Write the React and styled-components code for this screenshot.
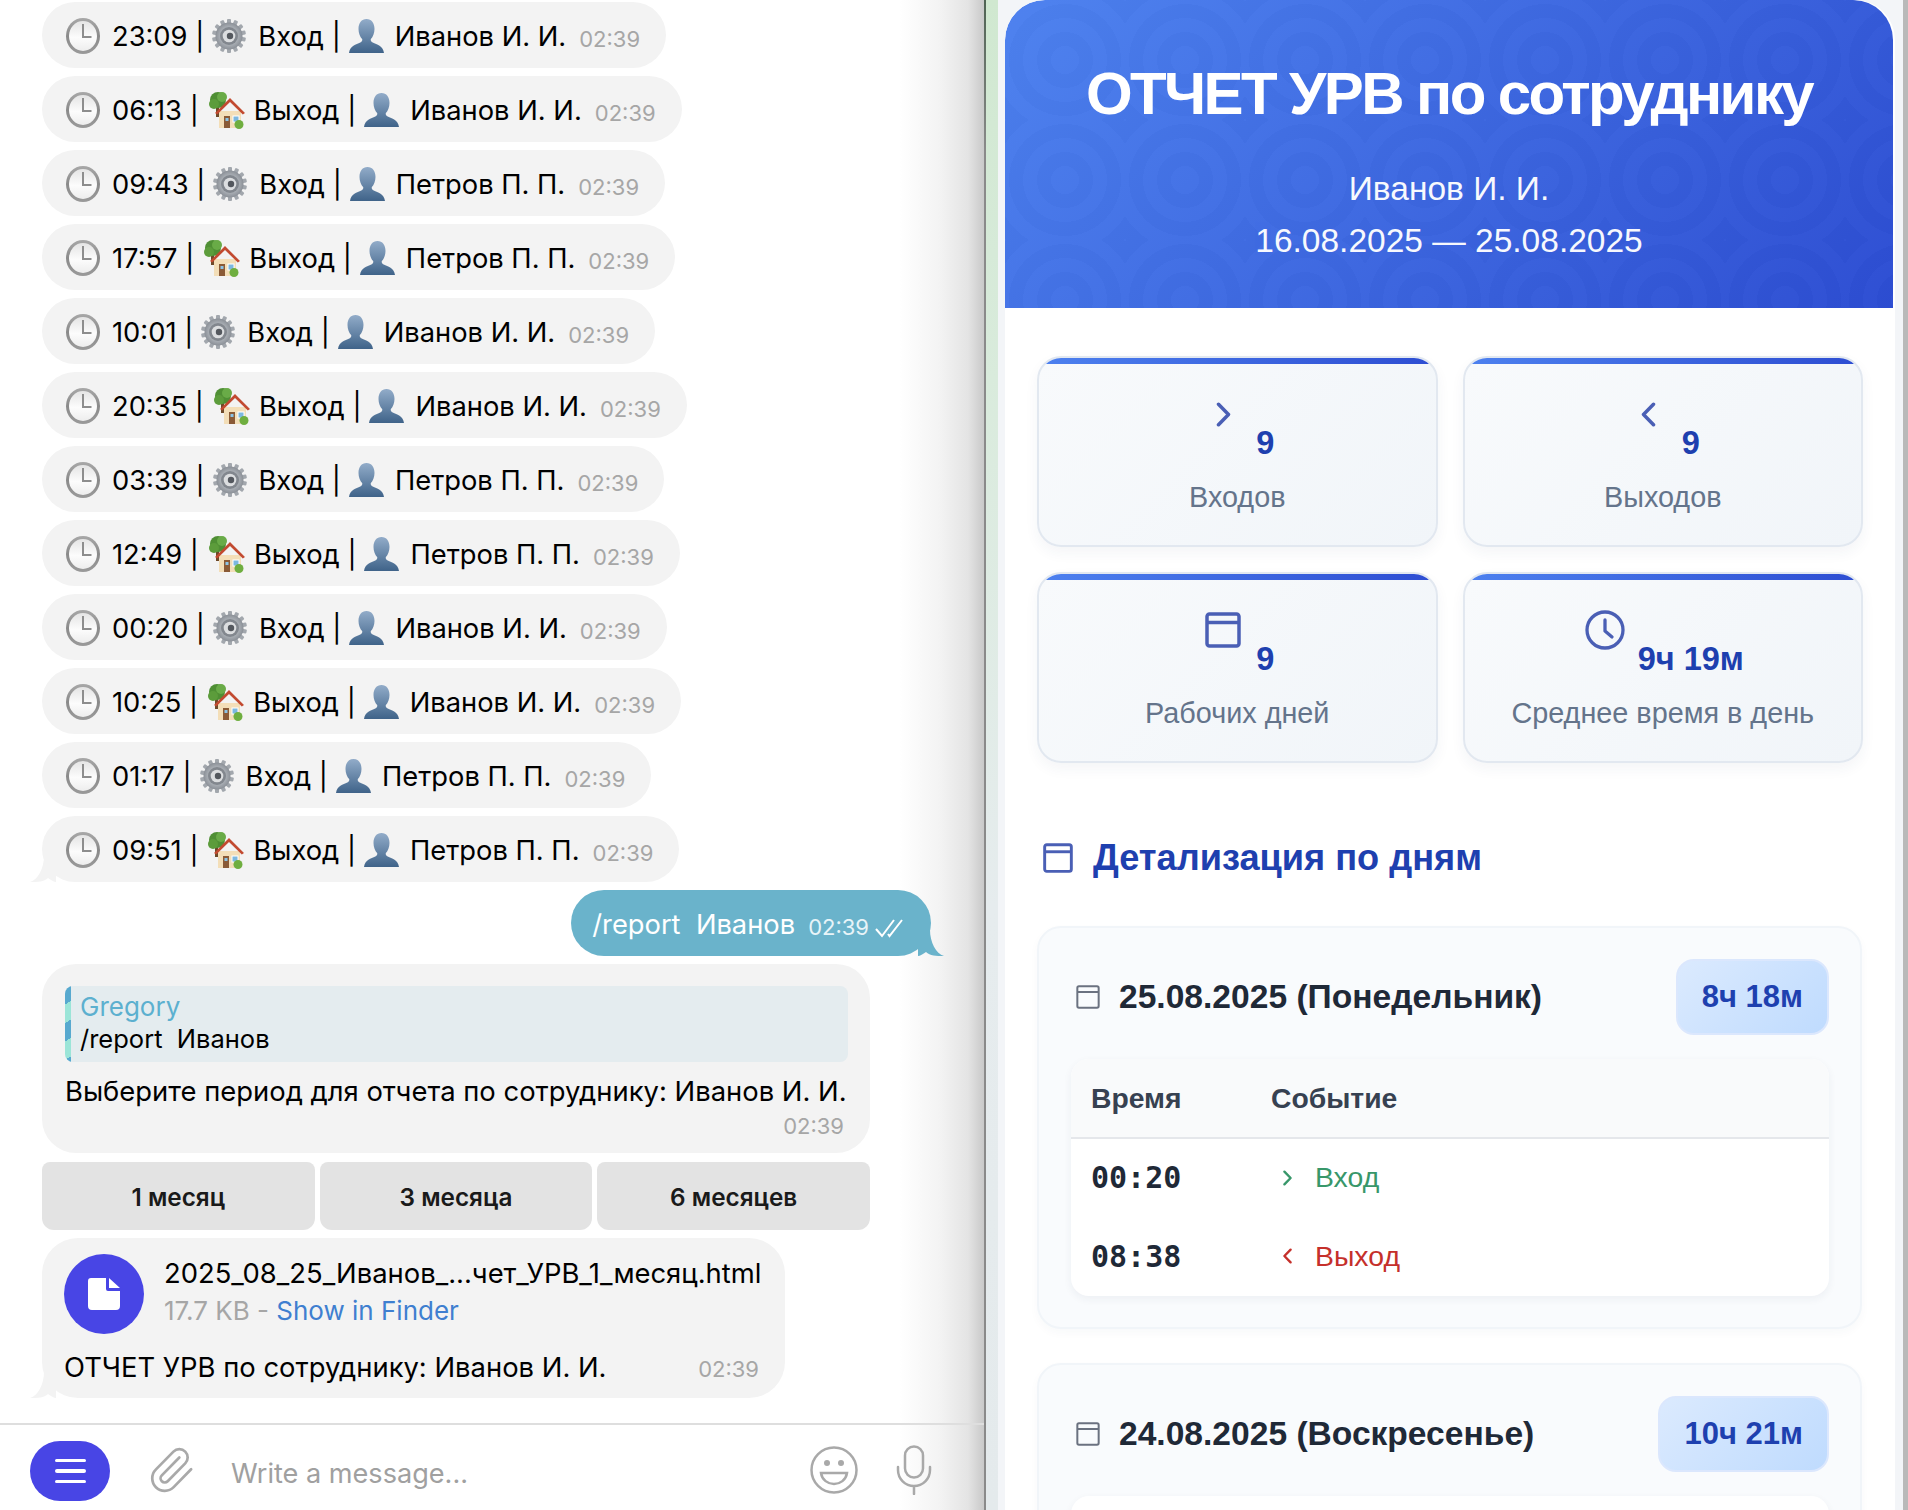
import React, { useId } from "react";
import styled, { createGlobalStyle } from "styled-components";
import { Paperclip } from "lucide-react";

const Global = createGlobalStyle`
  html, body { margin: 0; padding: 0; background: #fff; }
  * { box-sizing: border-box; }
`;

const Page = styled.div`
  width: 1908px; height: 1510px; display: flex; overflow: hidden;
  font-family: Inter, "Liberation Sans", sans-serif;
`;
const ChatPane = styled.section`
  width: 984px; height: 100%; display: flex; flex-direction: column; flex: none;
  background: linear-gradient(to right, #fff 0, #fff 900px, #f3f3f3 940px, #e4e4e4 968px, #c9c9c9 984px);
  color: #000;
`;
const MessageList = styled.div`
  flex: 1; padding: 2px 0 0 42px; display: flex; flex-direction: column; align-items: flex-start; gap: 8px;
`;
const Bubble = styled.div`
  position: relative; height: 66px; border-radius: 33px; background: #f3f3f3;
  display: inline-flex; align-items: center; padding: 2px 26px 0 24px; font-size: 27.3px; white-space: pre;
`;
const Seg = styled.span`
  display: inline-flex; align-items: center; margin-right: ${p => p.$mr ?? 9}px;
`;
const Time = styled.span`
  font-size: 22px; color: ${p => p.$light ? "#e8f4f8" : "#a6a6a6"}; position: ${p => p.$static ? "static" : "relative"};
  top: 3px; margin-left: ${p => p.$ml ?? 13}px;
`;
const TailSvg = styled.svg`
  position: absolute; bottom: 0; ${p => p.$right ? "right: -13px;" : "left: -12px;"} width: 26px; height: 26px;
`;
const OutBubble = styled(Bubble)`
  align-self: flex-end; margin-right: 53px; background: #6ab3cb; color: #fff; padding: 2px 24px 0 21px;
`;
const ReplyBubble = styled.div`
  width: 828px; height: 189px; border-radius: 34px; background: #f3f3f3; padding: 22px 22px 0 23px; margin-bottom: 1px;
  display: flex; flex-direction: column;
`;
const Quote = styled.div`
  height: 76px; border-radius: 8px; background: #e4ecef; position: relative; padding: 5px 0 0 15px; overflow: hidden;
  font-size: 26px; line-height: 32px; white-space: pre;
  &::before {
    content: ""; position: absolute; left: 0; top: 0; bottom: 0; width: 6px;
    background: repeating-linear-gradient(150deg, #57a9cf 0 16px, #9be5d8 16px 32px);
  }
`;
const QuoteName = styled.div` color: #5cb0cf; `;
const QuoteText = styled.div` font-size: 25.5px; `;
const ReplyText = styled.div` font-size: 27.4px; line-height: 34px; margin-top: 12px; white-space: pre; `;
const ReplyTime = styled.div` font-size: 22px; color: #a6a6a6; align-self: flex-end; margin: 3px 4px 0 0; line-height: 30px; `;
const ButtonRow = styled.div` width: 828px; display: grid; grid-template-columns: 1fr 1fr 1fr; gap: 5px; `;
const KeyButton = styled.button`
  height: 68px; border: 0; padding: 2px 0 0; background: #e3e3e3; border-radius: 8px 8px 12px 12px; font: 600 24.3px Inter, sans-serif; color: #1a1a1a;
`;
const FileBubble = styled.div`
  position: relative; width: 743px; height: 160px; border-radius: 36px; background: #f3f3f3; padding: 16px 22px 0 22px;
`;
const FileRow = styled.div` display: flex; gap: 20px; `;
const FileCircle = styled.div`
  width: 80px; height: 80px; border-radius: 50%; background: #4845e5; display: flex; align-items: center; justify-content: center; flex: none;
`;
const FileName = styled.div` font-size: 27.4px; line-height: 38px; white-space: nowrap; `;
const FileMeta = styled.div` font-size: 26px; line-height: 38px; color: #a6a6a6; `;
const FileLink = styled.span` color: #3f7fd0; `;
const Caption = styled.div`
  display: flex; justify-content: space-between; align-items: baseline; margin-top: 16px; font-size: 27.4px; line-height: 34px; padding-right: 4px;
`;
const Composer = styled.div`
  height: 87px; flex: none; border-top: 2px solid #dedede; display: flex; align-items: center; padding: 0 52px 0 30px;
`;
const MenuButton = styled.div`
  width: 80px; height: 60px; border-radius: 30px; background: #4845e5; display: flex; flex-direction: column; gap: 7px;
  align-items: center; justify-content: center; margin-top: 7px;
`;
const MenuBar = styled.span` width: 31px; height: 3.5px; border-radius: 2px; background: #fff; `;
const ClipIcon = styled(Paperclip)` margin: 5px 0 0 36px; flex: none; color: #a9a9a9; `;
const Placeholder = styled.div` flex: 1; margin: 11px 0 0 35px; font-size: 27.1px; color: #a0a0a0; `;
const ComposerIcon = styled.svg` flex: none; margin: 4px 0 0 ${p => p.$ml}px; `;
const CheckMarks = styled.svg` margin-left: 6px; position: relative; top: 4px; `;

const Divider = styled.div`
  width: 2px; flex: none; background: linear-gradient(to bottom, #4f6353 0, #8a8a8a 10%, #8a8a8a 100%);
`;
const Stripe = styled.div`
  width: 12px; flex: none; background: linear-gradient(to bottom, #d0e8d0 0, #d9ebdc 25%, #e6ecee 60%, #e4eaec 100%);
`;
const ReportWindow = styled.div`
  flex: 1; background: #f3f5f8; padding-left: 7px; display: flex; border-right: 5px solid #b9b9b9; padding-right: 8px;
`;
const Report = styled.main`
  width: 890px; background: #fff; font-family: "Liberation Sans", Arial, sans-serif; border-radius: 40px 40px 0 0; overflow: hidden;
`;
const Header = styled.header`
  width: 888px; height: 308px; border-radius: 40px 40px 0 0; color: #fff; text-align: center; padding-top: 58px;
  background:
    repeating-radial-gradient(circle at 60px 60px, rgba(255,255,255,.012) 0 14px, rgba(0,0,0,.01) 14px 28px) 0 0 / 120px 120px,
    linear-gradient(135deg, #4d81ef 0%, #2d4dd2 100%);
`;
const Title = styled.h1` margin: 0; font-size: 60px; line-height: 72px; font-weight: 700; letter-spacing: -2.6px; `;
const Sub = styled.div` font-size: 33.5px; line-height: 52px; opacity: .96; `;
const SubFirst = styled(Sub)` margin-top: 33px; `;
const Body = styled.div` padding: 48px 32px 0 32px; `;
const Stats = styled.div` display: grid; grid-template-columns: 400.5px 400.5px; gap: 25px; `;
const StatCard = styled.div`
  position: relative; height: 191px; border-radius: 24px; border: 2px solid #e2e8f0; overflow: hidden; text-align: center;
  background: linear-gradient(135deg, #f8fafc, #f1f5f9); box-shadow: 0 6px 14px rgba(30,50,90,.05); padding-top: 32px;
  &::before {
    content: ""; position: absolute; left: 0; right: 0; top: 0; height: 6px; background: linear-gradient(90deg, #4d81ef, #2d4dd2);
  }
`;
const StatTop = styled.div` display: flex; justify-content: center; height: 64px; `;
const StatIconBox = styled.div` width: 46px; height: 48px; display: flex; align-items: center; justify-content: center; margin-right: 10px; `;
const StatValue = styled.div` font-size: 32.5px; font-weight: 700; color: #1e40af; line-height: 40px; margin-top: 33px; `;
const StatLabel = styled.div` font-size: 28.8px; color: #64748b; line-height: 36px; margin-top: 25px; `;
const SectionHead = styled.h2`
  display: flex; align-items: center; gap: 20px; margin: 75px 0 48px 6px; height: 40px; font-size: 36.2px; color: #1e40af; font-weight: 700;
`;
const DayCard = styled.article`
  border-radius: 24px; border: 2px solid #f1f5f9; background: #f9fbfd; padding: 31px 31px 31px 32px; margin-bottom: 34px;
  box-shadow: 0 4px 10px rgba(30,50,90,.03); width: 825px;
`;
const DayHead = styled.div` display: flex; align-items: center; justify-content: space-between; height: 76px; margin-bottom: 24px; `;
const DayTitle = styled.h3` display: flex; align-items: center; gap: 19px; margin: 0 0 1px 5px; font-size: 33.6px; font-weight: 700; color: #1f2937; `;
const Badge = styled.div`
  height: 76px; padding: 0 24px; border-radius: 18px; border: 2px solid #dbe7fd; display: flex; align-items: center;
  background: linear-gradient(135deg, #dbeafe, #bfdbfe); color: #1e40af; font-size: 31px; font-weight: 700;
`;
const TableBox = styled.div`
  border-radius: 18px; overflow: hidden; background: #fff; box-shadow: 0 3px 8px rgba(30,50,90,.06);
  min-height: 120px;
`;
const Table = styled.table` width: 100%; border-collapse: collapse; table-layout: fixed; `;
const Th = styled.th`
  height: 79px; padding: 0 0 0 20px; text-align: left; background: #f9fafb; color: #374151; font-size: 28.3px; font-weight: 700;
  border-bottom: 2px solid #e5e7eb; width: ${p => p.$w || "auto"};
`;
const TdTime = styled.td` height: 79px; padding: 0 0 1px 20px; font: 700 30px "DejaVu Sans Mono", monospace; color: #1f2937; `;
const TdEvent = styled.td` padding: 0 0 2px 20px; font-size: 28.4px; color: ${p => p.$c}; `;
const EventInner = styled.span` display: inline-flex; align-items: center; gap: 22px; padding-left: 11px; `;

function ClockEmoji() {
  const rim = useId();
  const face = useId();
  return (
    <svg width="34" height="36" viewBox="0 0 34 36">
      <defs>
        <linearGradient id={rim} x1="0" y1="0" x2="0" y2="1">
          <stop offset="0" stopColor="#a8a8a8" /><stop offset=".5" stopColor="#8a8a8a" /><stop offset="1" stopColor="#9a9a9a" />
        </linearGradient>
        <linearGradient id={face} x1="0" y1="0" x2="0" y2="1">
          <stop offset="0" stopColor="#e4e4e4" /><stop offset=".55" stopColor="#fcfcfc" /><stop offset="1" stopColor="#ededed" />
        </linearGradient>
      </defs>
      <ellipse cx="17" cy="18" rx="17" ry="18" fill={`url(#${rim})`} />
      <ellipse cx="17" cy="18" rx="14" ry="15" fill={`url(#${face})`} />
      <path d="M17 6V19H25.500" fill="none" stroke="#8d8d8d" strokeWidth="2" />
    </svg>
  );
}
function GearEmoji() {
  const id = useId();
  const teeth = Array.from({ length: 14 }, (_, i) => i * (360 / 14));
  return (
    <svg width="34" height="36" viewBox="0 0 34 36">
      <defs>
        <radialGradient id={id}>
          <stop offset="0" stopColor="#f0f0f0" /><stop offset=".6" stopColor="#aeb3b9" /><stop offset="1" stopColor="#8b9097" />
        </radialGradient>
      </defs>
      <g transform="translate(0 1)">
        {teeth.map(a => <rect key={a} x="15" y="0" width="4" height="7" rx="1" fill="#a2a7ad" transform={`rotate(${a} 17 17)`} />)}
        <circle cx="17" cy="17" r="13.500" fill={`url(#${id})`} />
        <circle cx="17" cy="17" r="9" fill="#82878e" />
        <circle cx="17" cy="17" r="6.300" fill="#dcdee0" />
        <circle cx="18" cy="17" r="3.200" fill="#54585e" />
      </g>
    </svg>
  );
}
function HouseEmoji() {
  return (
    <svg width="36" height="38" viewBox="0 0 36 38">
      <rect x="7" y="14" width="3" height="12" fill="#6d4a2a" />
      <circle cx="9" cy="9" r="8" fill="#4f8f34" />
      <circle cx="5" cy="13" r="5" fill="#5c9c3b" />
      <circle cx="13" cy="6" r="5" fill="#69ab47" />
      <path d="M10 20h22v17H10z" fill="#f3deb8" />
      <path d="M6 22L21 7l15 15-2.2 1.6L21 11 8.2 23.6z" fill="#c24a30" />
      <rect x="15" y="25" width="6" height="12" fill="#8a5a36" />
      <rect x="24" y="25" width="6" height="6" fill="#7db8e0" stroke="#fff" strokeWidth="1" />
      <rect x="16.5" y="27" width="3" height="3" fill="#8cc3e6" />
      <circle cx="30" cy="33.5" r="4.5" fill="#6fae3f" />
    </svg>
  );
}
function PersonEmoji() {
  const id = useId();
  return (
    <svg width="35" height="34" viewBox="0 0 35 34">
      <defs>
        <linearGradient id={id} x1="0" y1="0" x2="0" y2="1">
          <stop offset="0" stopColor="#92acc9" /><stop offset="1" stopColor="#3f6389" />
        </linearGradient>
      </defs>
      <path fill={`url(#${id})`} d="M17.5 0c5 0 8 4 8 10 0 4-1.6 8-3.6 10-.6 1 0 2.6 1.8 3.6C28 25.6 34 27 35 34H0c1-7 7-8.4 11.300-10.400 1.800-1 2.400-2.600 1.800-3.600C11.100 18 9.500 14 9.500 10c0-6 3-10 8-10z" />
    </svg>
  );
}
function Tail({ color, right }) {
  return (
    <TailSvg $right={right} viewBox="0 0 26 26">
      {right
        ? <path d="M0 0H12C12 12 18 24 26 26 18 26 12 26 8 22 5 24 2 26 0 26z" fill={color} />
        : <path d="M26 0H14C14 12 8 24 0 26 8 26 14 26 18 22 21 24 24 26 26 26z" fill={color} />}
    </TailSvg>
  );
}
const Chevron = ({ dir, w, h, color, sw }) => (
  <svg width={w} height={h} viewBox={`0 0 ${w} ${h}`} fill="none" stroke={color} strokeWidth={sw} strokeLinecap="round" strokeLinejoin="round">
    <path d={dir === "r" ? `M${sw} ${sw / 2 + .5}L${w - sw} ${h / 2}L${sw} ${h - sw / 2 - .5}` : `M${w - sw} ${sw / 2 + .5}L${sw} ${h / 2}L${w - sw} ${h - sw / 2 - .5}`} />
  </svg>
);
const Calendar = ({ size, color, sw }) => (
  <svg width={size} height={size} viewBox="0 0 36 36" fill="none" stroke={color} strokeWidth={sw}>
    <rect x="2" y="2" width="32" height="32" rx="2.500" />
    <path d="M2 10.500H34" />
  </svg>
);
const ClockIcon = () => (
  <svg width="40" height="40" viewBox="0 0 40 40" fill="none" stroke="#4a5fb5" strokeWidth="3.300" strokeLinecap="round" strokeLinejoin="round">
    <circle cx="20" cy="20" r="18" />
    <path d="M20 10V21L27 27" />
  </svg>
);
const StatIndigo = "#4a5fb5";

const rows = [
  ["23:09", "in", "Иванов И. И."], ["06:13", "out", "Иванов И. И."], ["09:43", "in", "Петров П. П."], ["17:57", "out", "Петров П. П."],
  ["10:01", "in", "Иванов И. И."], ["20:35", "out", "Иванов И. И."], ["03:39", "in", "Петров П. П."], ["12:49", "out", "Петров П. П."],
  ["00:20", "in", "Иванов И. И."], ["10:25", "out", "Иванов И. И."], ["01:17", "in", "Петров П. П."], ["09:51", "out", "Петров П. П."],
];

function LogBubble({ time, kind, name, tail }) {
  return (
    <Bubble>
      <Seg $mr={12}><ClockEmoji /></Seg>
      <Seg $mr={kind === "in" ? 8 : 10}>{time} |</Seg>
      <Seg $mr={kind === "in" ? 12 : 9}>{kind === "in" ? <GearEmoji /> : <HouseEmoji />}</Seg>
      <Seg $mr={8}>{kind === "in" ? "Вход" : "Выход"} |</Seg>
      <Seg $mr={11}><PersonEmoji /></Seg>
      <span>{name}</span>
      <Time>02:39</Time>
      {tail && <Tail color="#f3f3f3" />}
    </Bubble>
  );
}

function DayBlock({ title, total, events }) {
  return (
    <DayCard>
      <DayHead>
        <DayTitle><Calendar size={24} color="#6b7280" sw={3} />{title}</DayTitle>
        <Badge>{total}</Badge>
      </DayHead>
      <TableBox>
        {events && (
          <Table>
            <thead>
              <tr><Th $w="180px">Время</Th><Th>Событие</Th></tr>
            </thead>
            <tbody>
              {events.map(([t, k]) => (
                <tr key={t}>
                  <TdTime>{t}</TdTime>
                  <TdEvent $c={k === "in" ? "#38976a" : "#c5302b"}>
                    <EventInner>
                      <Chevron dir={k === "in" ? "r" : "l"} w={11} h={16} color={k === "in" ? "#38976a" : "#c5302b"} sw={2.4} />
                      {k === "in" ? "Вход" : "Выход"}
                    </EventInner>
                  </TdEvent>
                </tr>
              ))}
            </tbody>
          </Table>
        )}
      </TableBox>
    </DayCard>
  );
}

export default function App() {
  return (
    <Page>
      <Global />
      <ChatPane>
        <MessageList>
          {rows.map(([t, k, n], i) => <LogBubble key={t} time={t} kind={k} name={n} tail={i === rows.length - 1} />)}
          <OutBubble>
            <span>/report  Иванов</span>
            <Time $light $ml={13}>02:39</Time>
            <CheckMarks width="32" height="22" viewBox="0 0 32 22" fill="none" stroke="#fff" strokeWidth="2">
              <path d="M1 12L7 19L19 3M13 17L14.500 19L27 3" />
            </CheckMarks>
            <Tail color="#6ab3cb" right />
          </OutBubble>
          <ReplyBubble>
            <Quote>
              <QuoteName>Gregory</QuoteName>
              <QuoteText>/report  Иванов</QuoteText>
            </Quote>
            <ReplyText>Выберите период для отчета по сотруднику: Иванов И. И.</ReplyText>
            <ReplyTime>02:39</ReplyTime>
          </ReplyBubble>
          <ButtonRow>
            <KeyButton>1 месяц</KeyButton>
            <KeyButton>3 месяца</KeyButton>
            <KeyButton>6 месяцев</KeyButton>
          </ButtonRow>
          <FileBubble>
            <FileRow>
              <FileCircle>
                <svg width="32" height="32" viewBox="0 0 32 32">
                  <path fill="#fff" d="M3 0H18V11a2 2 0 0 0 2 2H32V28a4 4 0 0 1-4 4H4a4 4 0 0 1-4-4V3a3 3 0 0 1 3-3zM21 0L32 10H21z" />
                </svg>
              </FileCircle>
              <div>
                <FileName>2025_08_25_Иванов_...чет_УРВ_1_месяц.html</FileName>
                <FileMeta>17.7 KB - <FileLink>Show in Finder</FileLink></FileMeta>
              </div>
            </FileRow>
            <Caption>
              <span>ОТЧЕТ УРВ по сотруднику: Иванов И. И.</span>
              <Time $static $ml={0}>02:39</Time>
            </Caption>
            <Tail color="#f3f3f3" />
          </FileBubble>
        </MessageList>
        <Composer>
          <MenuButton><MenuBar /><MenuBar /><MenuBar /></MenuButton>
          <ClipIcon size={50} strokeWidth={1.3} />
          <Placeholder>Write a message...</Placeholder>
          <ComposerIcon $ml={0} width="48" height="48" viewBox="0 0 48 48" fill="none" stroke="#a9a9a9" strokeWidth="2.500">
            <circle cx="24" cy="24" r="22.500" />
            <circle cx="17" cy="17" r="3" fill="#a9a9a9" stroke="none" />
            <circle cx="31" cy="17" r="3" fill="#a9a9a9" stroke="none" />
            <path d="M11 27H37C36 34 30 38 24 38S12 34 11 27Z" />
          </ComposerIcon>
          <ComposerIcon $ml={38} width="36" height="50" viewBox="0 0 36 50" fill="none" stroke="#a9a9a9" strokeWidth="2.500" strokeLinecap="round">
            <rect x="9" y="1.500" width="18" height="31" rx="9" />
            <path d="M2 22V25a16 16 0 0 0 32 0V22M18 41V49" />
          </ComposerIcon>
        </Composer>
      </ChatPane>
      <Divider />
      <Stripe />
      <ReportWindow>
        <Report>
          <Header>
            <Title>ОТЧЕТ УРВ по сотруднику</Title>
            <SubFirst>Иванов И. И.</SubFirst>
            <Sub>16.08.2025 — 25.08.2025</Sub>
          </Header>
          <Body>
            <Stats>
              <StatCard>
                <StatTop>
                  <StatIconBox><Chevron dir="r" w={17} h={25} color={StatIndigo} sw={3.500} /></StatIconBox>
                  <StatValue>9</StatValue>
                </StatTop>
                <StatLabel>Входов</StatLabel>
              </StatCard>
              <StatCard>
                <StatTop>
                  <StatIconBox><Chevron dir="l" w={17} h={25} color={StatIndigo} sw={3.500} /></StatIconBox>
                  <StatValue>9</StatValue>
                </StatTop>
                <StatLabel>Выходов</StatLabel>
              </StatCard>
              <StatCard>
                <StatTop>
                  <StatIconBox><Calendar size={36} color={StatIndigo} sw={3.500} /></StatIconBox>
                  <StatValue>9</StatValue>
                </StatTop>
                <StatLabel>Рабочих дней</StatLabel>
              </StatCard>
              <StatCard>
                <StatTop>
                  <StatIconBox><ClockIcon /></StatIconBox>
                  <StatValue>9ч 19м</StatValue>
                </StatTop>
                <StatLabel>Среднее время в день</StatLabel>
              </StatCard>
            </Stats>
            <SectionHead><Calendar size={30} color={StatIndigo} sw={3.500} />Детализация по дням</SectionHead>
            <DayBlock title="25.08.2025 (Понедельник)" total="8ч 18м" events={[["00:20", "in"], ["08:38", "out"]]} />
            <DayBlock title="24.08.2025 (Воскресенье)" total="10ч 21м" />
          </Body>
        </Report>
      </ReportWindow>
    </Page>
  );
}
